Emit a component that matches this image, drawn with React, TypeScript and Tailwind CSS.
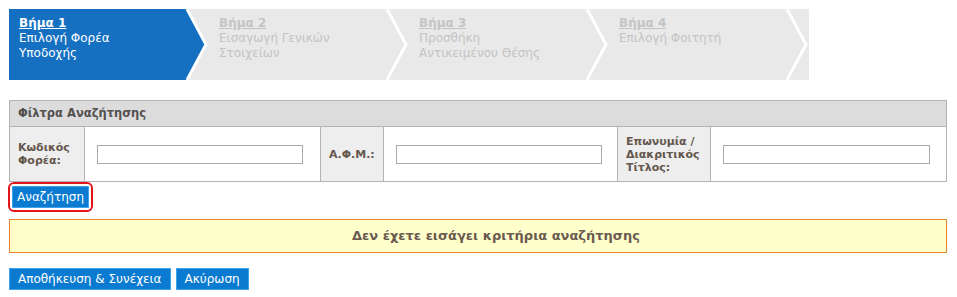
import React from 'react';

const steps = [
  { title: 'Βήμα 1', lines: ['Επιλογή Φορέα', 'Υποδοχής'], active: true },
  { title: 'Βήμα 2', lines: ['Εισαγωγή Γενικών', 'Στοιχείων'], active: false },
  { title: 'Βήμα 3', lines: ['Προσθήκη', 'Αντικειμένου Θέσης'], active: false },
  { title: 'Βήμα 4', lines: ['Επιλογή Φοιτητή'], active: false },
];

function Chevron() {
  return (
    <svg className="absolute right-0 top-0 h-[71px] w-[24px]" viewBox="0 0 24 71">
      <polyline points="2,0 21,35.5 2,71" fill="none" stroke="#ffffff" strokeWidth="3" />
    </svg>
  );
}

function Step({ title, lines, active }: { title: string; lines: string[]; active: boolean }) {
  return (
    <div className="relative w-[200px] h-[71px]">
      {active && (
        <div className="absolute inset-0 bg-[#1570c1] [clip-path:polygon(0_0,178px_0,198px_50%,178px_100%,0_100%)]" />
      )}
      <div
        className={`relative pl-[10px] pt-[7px] leading-[15px] text-[12px] ${
          active ? 'text-white' : 'text-[#c4c4c4]'
        }`}
      >
        <div className="font-bold underline">{title}</div>
        {lines.map(l => (
          <div key={l}>{l}</div>
        ))}
      </div>
      <Chevron />
    </div>
  );
}

function Field() {
  return (
    <div className="bg-white flex items-center pl-[12px] border-r border-[#b3b3b3]">
      <input className="w-[206px] h-[19px] border border-[#a9a9a9] bg-white outline-none" />
    </div>
  );
}

export default function App() {
  return (
    <div className="p-[9px] bg-white min-h-[297px] font-['DejaVu_Sans',Verdana,sans-serif]">
      {/* Wizard */}
      <div className="flex w-[800px] bg-[#e9e9e9]">
        {steps.map(s => (
          <Step key={s.title} {...s} />
        ))}
      </div>

      {/* Filters */}
      <div className="mt-[20px] w-[938px] border border-[#b3b3b3]">
        <div className="h-[26px] bg-[#dcdcdc] border-b border-[#b3b3b3] flex items-center px-[8px] text-[11.5px] font-bold text-[#555050]">
          Φίλτρα Αναζήτησης
        </div>
        <div className="grid grid-cols-[75px_236px_63px_234px_93px_1fr] h-[54px]">
          <div className="bg-[#eeeeee] border-r border-[#b3b3b3] flex items-center px-[8px] text-[11px] leading-[13px] font-bold text-[#64574d]">
            Κωδικός Φορέα:
          </div>
          <Field />
          <div className="bg-[#eeeeee] border-r border-[#b3b3b3] flex items-center px-[8px] text-[11px] leading-[13px] font-bold text-[#64574d]">
            Α.Φ.Μ.:
          </div>
          <Field />
          <div className="bg-[#eeeeee] border-r border-[#b3b3b3] flex items-center px-[8px] text-[11px] leading-[13px] font-bold text-[#64574d]">
            Επωνυμία / Διακριτικός Τίτλος:
          </div>
          <div className="bg-white flex items-center pl-[12px]">
            <input className="w-[207px] h-[19px] border border-[#a9a9a9] bg-white outline-none" />
          </div>
        </div>
      </div>

      {/* Search button */}
      <div className="-ml-[1px] inline-flex p-[2px] border-2 border-[#e2141c] rounded-[6px]">
        <button className="h-[22px] px-[4px] bg-[#0a7bd0] border border-[#3ea3ea] text-white text-[12px]">
          Αναζήτηση
        </button>
      </div>

      {/* Alert */}
      <div className="mt-[7px] w-[938px] h-[34px] bg-[#ffffcc] border border-[#e8822a] flex items-center justify-center pl-[36px] text-[13px] font-bold text-[#6a5a4f]">
        Δεν έχετε εισάγει κριτήρια αναζήτησης
      </div>

      {/* Actions */}
      <div className="mt-[15px] flex gap-[5px]">
        <button className="h-[22px] px-[8px] bg-[#0a7bd0] border border-[#3ea3ea] text-white text-[12px]">
          Αποθήκευση &amp; Συνέχεια
        </button>
        <button className="h-[22px] px-[8px] bg-[#0a7bd0] border border-[#3ea3ea] text-white text-[12px]">
          Ακύρωση
        </button>
      </div>
    </div>
  );
}
